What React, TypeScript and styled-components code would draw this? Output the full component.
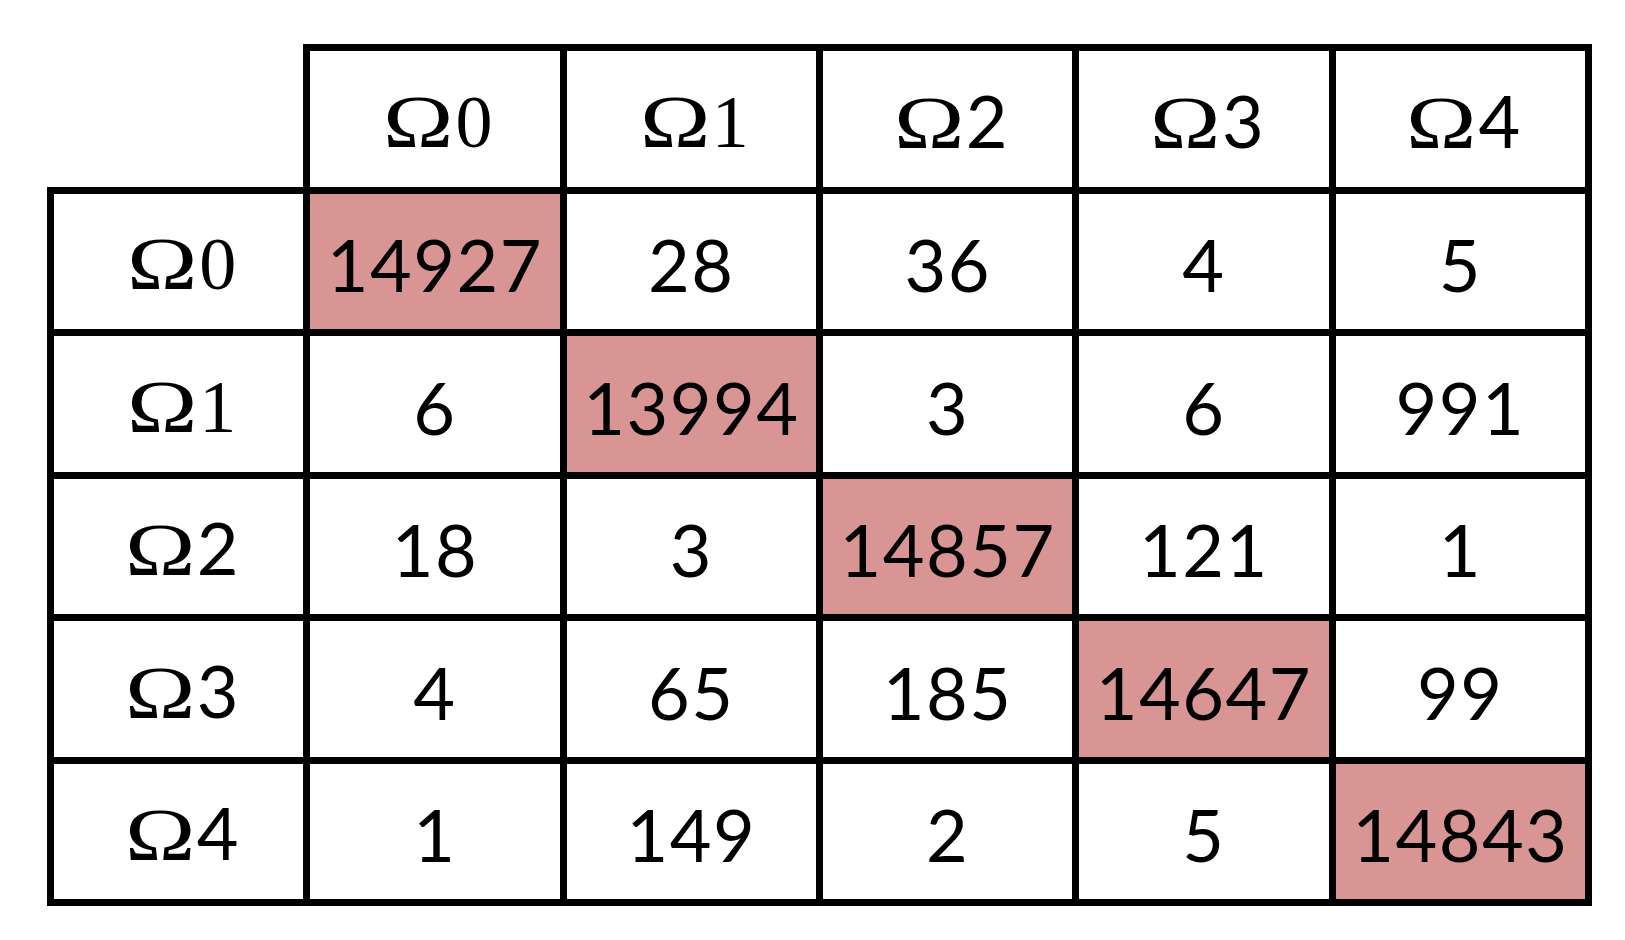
import styled, {createGlobalStyle} from 'styled-components';

const GlobalStyle = createGlobalStyle`
  html, body {
    margin: 0;
    padding: 0;
    background: #ffffff;
  }
`;

const classes = [0, 1, 2, 3, 4];

const matrix = [
    [14927, 28, 36, 4, 5],
    [6, 13994, 3, 6, 991],
    [18, 3, 14857, 121, 1],
    [4, 65, 185, 14647, 99],
    [1, 149, 2, 5, 14843],
];

const Page = styled.div`
  padding: 44px 0 0 47px;
`;

const Grid = styled.div`
  display: grid;
  grid-template-columns: 263.33px repeat(5, 256.33px);
  grid-template-rows: 149.5px repeat(5, 142.5px);
`;

type CellProps = {
    $top?: boolean;
    $left?: boolean;
    $hit?: boolean;
};

const Cell = styled.div<CellProps>`
  box-sizing: border-box;
  display: flex;
  align-items: center;
  justify-content: center;
  padding-top: 6px;
  border-right: 7px solid #000;
  border-bottom: 7px solid #000;
  border-top: ${p => (p.$top ? '7px solid #000' : 'none')};
  border-left: ${p => (p.$left ? '7px solid #000' : 'none')};
  background: ${p => (p.$hit ? '#d99594' : '#ffffff')};
  color: #000;
  font-family: Lato, "Liberation Sans", sans-serif;
  font-size: 72px;
  letter-spacing: 1.5px;
  line-height: 1;
`;

const Corner = styled.div`
  box-sizing: border-box;
  border-right: 7px solid #000;
  border-bottom: 7px solid #000;
  background: #ffffff;
`;

const Label = styled.span`
  display: inline-flex;
  align-items: baseline;
  letter-spacing: 0;
  margin-left: 6px;
`;

const Omega = styled.span`
  display: inline-block;
  font-family: "Liberation Serif", "DejaVu Serif", serif;
  font-size: 74px;
  transform: scaleX(1.28);
  transform-origin: left center;
  margin-right: 17px;
`;

const Index = styled.span<{ $serif: boolean }>`
  font-family: ${p => (p.$serif ? '"Liberation Serif", serif' : 'Lato, "Liberation Sans", sans-serif')};
  font-size: ${p => (p.$serif ? '74px' : '72px')};
`;

const ClassLabel = ({n}: { n: number }) => (
    <Label>
        <Omega>Ω</Omega>
        <Index $serif={n < 2}>{n}</Index>
    </Label>
);

export default function App() {
    return (
        <>
            <GlobalStyle/>
            <Page>
                <Grid>
                    <Corner/>
                    {classes.map(c => (
                        <Cell key={'h' + c} $top>
                            <ClassLabel n={c}/>
                        </Cell>
                    ))}
                    {matrix.map((row, r) => (
                        <>
                            <Cell key={'r' + r} $left>
                                <ClassLabel n={r}/>
                            </Cell>
                            {row.map((v, c) => (
                                <Cell key={r + '-' + c} $hit={r === c}>{v}</Cell>
                            ))}
                        </>
                    ))}
                </Grid>
            </Page>
        </>
    );
}
